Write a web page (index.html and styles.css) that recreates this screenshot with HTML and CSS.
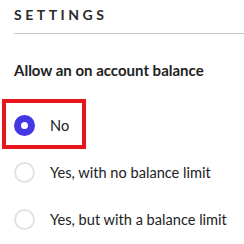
FILE: index.html
```html
<!DOCTYPE html>
<html lang="en">
<head>
    <meta charset="UTF-8">
    <meta name="viewport" content="width=device-width, initial-scale=1.0">
    <title>Settings</title>
    <link rel="stylesheet" href="styles.css">
</head>
<body>
    <div class="settings">
        <h2 class="title">Settings</h2>
        <div class="field">
            <div class="field-label">Allow an on account balance</div>
            <label class="option highlighted">
                <input type="radio" name="balance" checked>
                <span class="radio"></span>
                <span>No</span>
            </label>
            <label class="option">
                <input type="radio" name="balance">
                <span class="radio"></span>
                <span>Yes, with no balance limit</span>
            </label>
            <label class="option">
                <input type="radio" name="balance">
                <span class="radio"></span>
                <span>Yes, but with a balance limit</span>
            </label>
        </div>
    </div>
</body>
</html>
```

FILE: styles.css
```css
body {
    margin: 0;
    font-family: Lato, "Open Sans", sans-serif;
    color: #222;
    background: white;
}

.settings {
    padding-left: 14px;
}

.title {
    margin: 0;
    padding: 6px 0 10px;
    font-size: 14px;
    font-weight: 700;
    letter-spacing: 3.5px;
    text-transform: uppercase;
    color: #2b2b2b;
    border-bottom: 1px solid #c8c8c8;
}

.field-label {
    margin-top: 27px;
    margin-bottom: 23px;
    font-size: 15px;
    font-weight: 700;
    color: #222;
}

.option {
    position: relative;
    display: flex;
    align-items: center;
    gap: 15px;
    height: 47px;
    font-size: 14.6px;
    cursor: pointer;
}

.option input {
    display: none;
}

.radio {
    width: 21px;
    height: 21px;
    box-sizing: border-box;
    border-radius: 50%;
    border: 2px solid #e3e3e3;
}

.option input:checked + .radio {
    border: 7px solid #4337e6;
}

.highlighted::after {
    content: "";
    position: absolute;
    top: -3px;
    left: -12px;
    width: 84px;
    height: 50px;
    box-sizing: border-box;
    border: 4px solid #e8141c;
}
```
